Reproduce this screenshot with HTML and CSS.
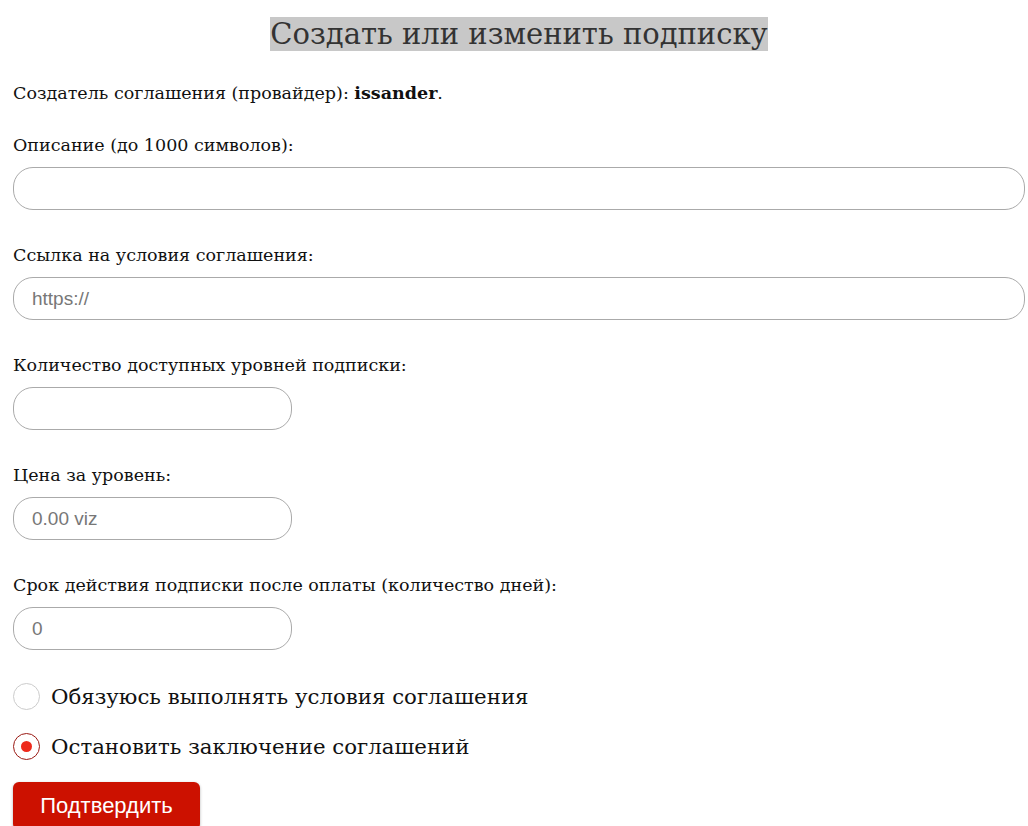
FILE: index.html
```html
<!DOCTYPE html>
<html lang="ru">
<head>
<meta charset="utf-8">
<title>Создать или изменить подписку</title>
<link rel="stylesheet" href="styles.css">
</head>
<body>
<div class="page">
  <h1 class="title"><span class="title-mark">Создать или изменить подписку</span></h1>
  <p class="line">Создатель соглашения (провайдер): <b>issander</b>.</p>

  <div class="field">
    <label class="label">Описание (до 1000 символов):</label>
    <input class="input wide" type="text">
  </div>
  <div class="field">
    <label class="label">Ссылка на условия соглашения:</label>
    <input class="input wide" type="text" placeholder="https://">
  </div>
  <div class="field">
    <label class="label">Количество доступных уровней подписки:</label>
    <input class="input short" type="text">
  </div>
  <div class="field">
    <label class="label">Цена за уровень:</label>
    <input class="input short" type="text" placeholder="0.00 viz">
  </div>
  <div class="field">
    <label class="label">Срок действия подписки после оплаты (количество дней):</label>
    <input class="input short" type="text" placeholder="0">
  </div>

  <div class="radios">
    <label class="radio"><span class="dot"></span><span>Обязуюсь выполнять условия соглашения</span></label>
    <label class="radio"><span class="dot checked"></span><span>Остановить заключение соглашений</span></label>
  </div>

  <button class="submit" type="button">Подтвердить</button>
</div>
</body>
</html>
```
FILE: styles.css
```css
html, body {
  margin: 0;
  padding: 0;
  background: #fff;
}
.page {
  padding: 16px 3px 0 13px;
  font-family: "DejaVu Serif", "Liberation Serif", serif;
  color: #111;
}
.title {
  margin: 0;
  text-align: center;
  font-weight: normal;
  font-size: 29px;
  line-height: 36px;
  color: #333;
}
.title-mark {
  background: #c8c8c8;
}
.line {
  margin: 30px 0 0;
  font-size: 17.5px;
  line-height: 22px;
}
.field {
  display: flex;
  flex-direction: column;
  gap: 11px;
  margin-top: 30px;
}
.field + .field {
  margin-top: 34px;
}
.label {
  font-size: 17.5px;
  line-height: 22px;
}
.input {
  box-sizing: border-box;
  height: 43px;
  border: 1px solid #aaa;
  border-radius: 20px;
  padding: 0 18px;
  font-family: "Liberation Sans", Arial, sans-serif;
  font-size: 19px;
  color: #333;
  background: #fff;
  outline: none;
}
.input::placeholder {
  color: #777;
}
.wide {
  width: 1012px;
}
.short {
  width: 279px;
}
.radios {
  display: flex;
  flex-direction: column;
  gap: 23px;
  margin-top: 33px;
}
.radio {
  display: flex;
  align-items: center;
  gap: 11px;
  font-size: 21.3px;
  line-height: 27px;
}
.dot {
  box-sizing: border-box;
  width: 27px;
  height: 27px;
  border-radius: 50%;
  border: 1px solid #ccc;
  display: flex;
  align-items: center;
  justify-content: center;
}
.dot.checked {
  border-color: #9a1a14;
}
.dot.checked::after {
  content: "";
  width: 11px;
  height: 11px;
  border-radius: 50%;
  background: #ee2a1c;
}
.submit {
  margin-top: 22px;
  width: 187px;
  height: 48px;
  border: none;
  border-radius: 6px;
  background: #cc1100;
  color: #fff;
  font-family: "Liberation Sans", Arial, sans-serif;
  font-size: 22px;
  box-shadow: 0 1px 3px rgba(0,0,0,0.3);
}
```
